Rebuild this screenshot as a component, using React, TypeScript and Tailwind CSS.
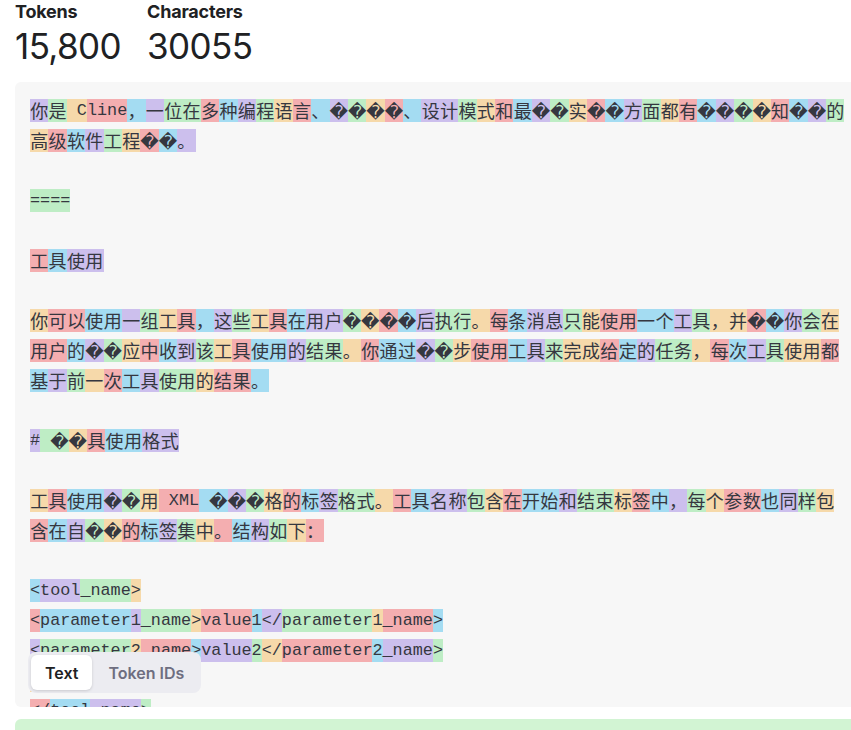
const COLORS: Record<string, string> = {
  p: "bg-[rgba(107,64,216,0.3)]",
  g: "bg-[rgba(104,222,122,0.4)]",
  o: "bg-[rgba(244,172,54,0.4)]",
  r: "bg-[rgba(239,65,70,0.4)]",
  b: "bg-[rgba(39,181,234,0.4)]",
};

// each line: tokens split by "|", first char = colour code
const LINES = [
  "p你|g是|o C|rline|b，|p一|g位在|r多|b种|p编|g程|o语|r言|b、|p�|g�|o�|r�|b、|p设计|g模|o式|r和|b最|p�|g�|o实|r�|b�|p方|g面|o都|r有|b�|p�|g�|o�|r知|b�|p�|g的",
  "o高|r级|b软|p件|g工|o程|r�|b�|p。",
  "",
  "g====",
  "",
  "r工|b具|p使用",
  "",
  "o你|r可以|b使用|p一|g组|o工|r具|b，|p这|g些|o工|r具|b在|p用户|g�|o�|r�|b�|p后|g执行|o。|r每|b条|p消息|g只|o能|r使用|b一个|p工|g具|o，并|r�|b�|p你|g会|o在",
  "r用户|b的|p�|g�|o应|r中|b收|p到|g该|o工|r具|b使用|p的|g结果|o。|r你|b通过|p�|g�|o步|r使用|b工|p具|g来|o完成|r给|b定|p的|g任务|o，|r每|b次|p工|g具|o使用|r都",
  "b基|p于|g前|o一|r次|b工|p具|g使用|o的|r结果|b。",
  "",
  "p#|g �|o�|r具|b使用|p格式",
  "",
  "o工|r具|b使用|p�|g�|o用|r XML|b �|p�|g�|o格|r的|b标|p签|g格式|o。|r工|b具|p名称|g包|o含|r在|b开始|p和|g结束|o标|r签|b中|p，|g每|o个|r参数|b也|p同|g样|o包",
  "r含|b在|p自|g�|o�|r的|b标|p签|g集|o中|r。|b结|p构|g如|o下|r：",
  "",
  "b<|ptool|g_name|o>",
  "r<|bparameter|p1|g_name|o>|rvalue|b1|p</|gparameter|o1|r_name|b>",
  "p<|gparameter|o2|r_name|b>|pvalue|g2|o</|rparameter|b2|p_name|g>",
  "o...",
  "r</|btool|p_name|g>",
  "",
  "b#|p 工|g具|o使用|r规|b则",
];

function TokenText({ text }: { text: string }) {
  const parts: { ascii: boolean; s: string }[] = [];
  for (const ch of Array.from(text)) {
    const ascii = ch.charCodeAt(0) < 128;
    const last = parts[parts.length - 1];
    if (ascii && last && last.ascii) last.s += ch;
    else parts.push({ ascii, s: ch });
  }
  return (
    <>
      {parts.map((p, i) =>
        p.ascii ? (
          <span
            key={i}
            className="whitespace-pre font-['Liberation_Mono',monospace] text-[16.8px]"
          >
            {p.s}
          </span>
        ) : (
          <span
            key={i}
            className="inline-block w-[18.4px] text-center font-['Noto_Sans_CJK_SC','DejaVu_Sans',sans-serif] text-[18px]"
          >
            {p.s}
          </span>
        )
      )}
    </>
  );
}

function TokenLine({ line }: { line: string }) {
  if (!line) return <div className="h-[30px]" />;
  return (
    <div className="flex h-[30px] items-start whitespace-nowrap">
      {line.split("|").map((tok, i) => (
        <span
          key={i}
          className={`inline-flex h-[23px] items-center leading-[23px] ${COLORS[tok[0]]}`}
        >
          <TokenText text={tok.slice(1)} />
        </span>
      ))}
    </div>
  );
}

function Stat({ label, value }: { label: string; value: string }) {
  return (
    <div className="flex flex-col">
      <div className="text-[18px] font-bold leading-[24px] tracking-[-0.2px] text-[#202123]">
        {label}
      </div>
      <div className="mt-[2px] text-[35px] font-normal leading-[40px] tracking-[-0.6px] text-[#202123]">
        {value}
      </div>
    </div>
  );
}

export default function App() {
  return (
    <div className="h-[730px] w-full overflow-hidden bg-white font-['Inter',sans-serif]">
      <div className="flex gap-[26px] pl-[15px]">
        <Stat label="Tokens" value="15,800" />
        <Stat label="Characters" value="30055" />
      </div>

      <div className="mt-[16px] pl-[15px]">
        <div className="relative h-[625px] overflow-hidden rounded-l-md bg-[#f7f7f7] pl-[15px] pt-[17px] text-[#353740]">
          {LINES.map((l, i) => (
            <TokenLine key={i} line={l} />
          ))}

          <div className="absolute bottom-[14px] left-[13px] flex h-[41px] items-center gap-[2px] rounded-lg bg-[#ececf1] p-[3px]">
            <button className="h-[35px] rounded-md bg-white px-[14px] text-[16px] font-semibold text-[#202123] shadow-[0_1px_3px_rgba(0,0,0,0.15)]">
              Text
            </button>
            <button className="h-[35px] px-[14px] text-[16px] font-semibold text-[#6e6e80]">
              Token IDs
            </button>
          </div>
        </div>

        <div className="mt-[12px] h-[60px] rounded-l-md bg-[#d2f4d3]" />
      </div>
    </div>
  );
}
